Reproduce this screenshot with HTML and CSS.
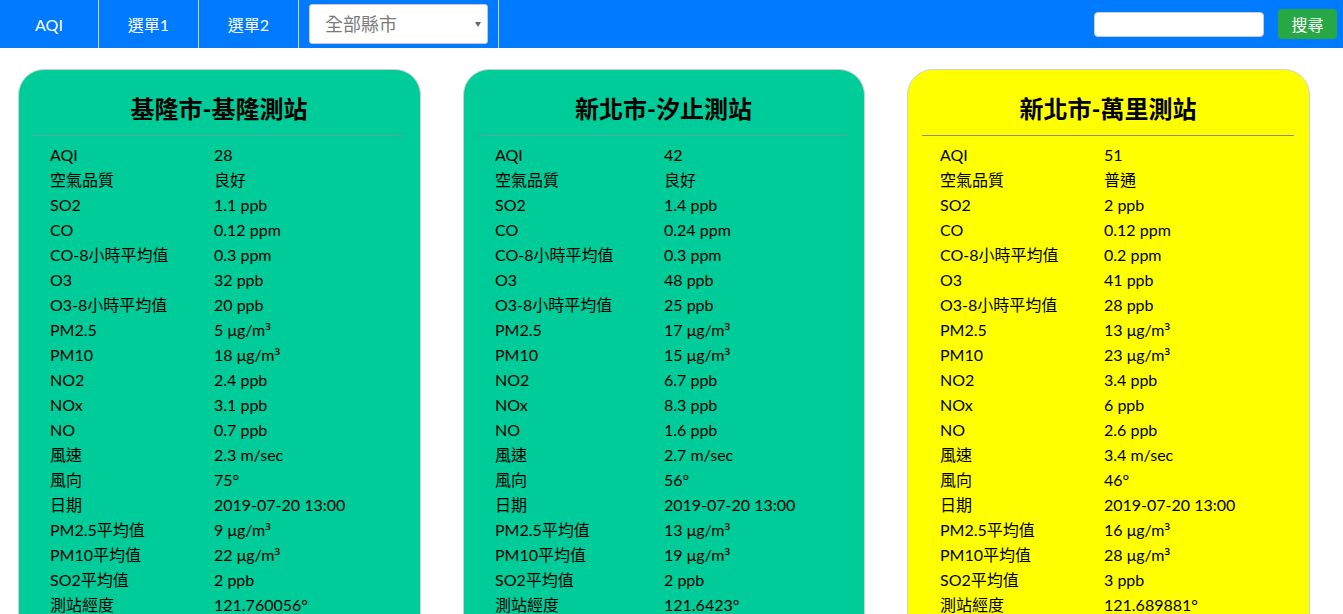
FILE: index.html
```html
<!DOCTYPE html>
<html lang="zh-Hant">
<head>
<meta charset="utf-8">
<title>AQI</title>
<link rel="stylesheet" href="styles.css">
</head>
<body>
<nav class="navbar">
  <a class="nav-item nav-first">AQI</a>
  <a class="nav-item">選單1</a>
  <a class="nav-item">選單2</a>
  <div class="nav-item nav-select-cell">
    <div class="select">全部縣市<span class="caret"></span></div>
  </div>
  <div class="nav-search">
    <div class="search-input"></div>
    <button class="search-btn">搜尋</button>
  </div>
</nav>

<main class="cards">
  <section class="card card-green">
    <h2 class="card-title">基隆市-基隆測站</h2>
    <div class="card-rule"></div>
    <dl class="rows">
      <dt>AQI</dt><dd>28</dd>
      <dt>空氣品質</dt><dd>良好</dd>
      <dt>SO2</dt><dd>1.1 ppb</dd>
      <dt>CO</dt><dd>0.12 ppm</dd>
      <dt>CO-8小時平均值</dt><dd>0.3 ppm</dd>
      <dt>O3</dt><dd>32 ppb</dd>
      <dt>O3-8小時平均值</dt><dd>20 ppb</dd>
      <dt>PM2.5</dt><dd>5 μg/m<span class="sup">³</span></dd>
      <dt>PM10</dt><dd>18 μg/m<span class="sup">³</span></dd>
      <dt>NO2</dt><dd>2.4 ppb</dd>
      <dt>NOx</dt><dd>3.1 ppb</dd>
      <dt>NO</dt><dd>0.7 ppb</dd>
      <dt>風速</dt><dd>2.3 m/sec</dd>
      <dt>風向</dt><dd>75°</dd>
      <dt>日期</dt><dd>2019-07-20 13:00</dd>
      <dt>PM2.5平均值</dt><dd>9 μg/m<span class="sup">³</span></dd>
      <dt>PM10平均值</dt><dd>22 μg/m<span class="sup">³</span></dd>
      <dt>SO2平均值</dt><dd>2 ppb</dd>
      <dt>測站經度</dt><dd>121.760056°</dd>
    </dl>
  </section>

  <section class="card card-green card-wide">
    <h2 class="card-title">新北市-汐止測站</h2>
    <div class="card-rule"></div>
    <dl class="rows">
      <dt>AQI</dt><dd>42</dd>
      <dt>空氣品質</dt><dd>良好</dd>
      <dt>SO2</dt><dd>1.4 ppb</dd>
      <dt>CO</dt><dd>0.24 ppm</dd>
      <dt>CO-8小時平均值</dt><dd>0.3 ppm</dd>
      <dt>O3</dt><dd>48 ppb</dd>
      <dt>O3-8小時平均值</dt><dd>25 ppb</dd>
      <dt>PM2.5</dt><dd>17 μg/m<span class="sup">³</span></dd>
      <dt>PM10</dt><dd>15 μg/m<span class="sup">³</span></dd>
      <dt>NO2</dt><dd>6.7 ppb</dd>
      <dt>NOx</dt><dd>8.3 ppb</dd>
      <dt>NO</dt><dd>1.6 ppb</dd>
      <dt>風速</dt><dd>2.7 m/sec</dd>
      <dt>風向</dt><dd>56°</dd>
      <dt>日期</dt><dd>2019-07-20 13:00</dd>
      <dt>PM2.5平均值</dt><dd>13 μg/m<span class="sup">³</span></dd>
      <dt>PM10平均值</dt><dd>19 μg/m<span class="sup">³</span></dd>
      <dt>SO2平均值</dt><dd>2 ppb</dd>
      <dt>測站經度</dt><dd>121.6423°</dd>
    </dl>
  </section>

  <section class="card card-yellow card-third">
    <h2 class="card-title">新北市-萬里測站</h2>
    <div class="card-rule"></div>
    <dl class="rows">
      <dt>AQI</dt><dd>51</dd>
      <dt>空氣品質</dt><dd>普通</dd>
      <dt>SO2</dt><dd>2 ppb</dd>
      <dt>CO</dt><dd>0.12 ppm</dd>
      <dt>CO-8小時平均值</dt><dd>0.2 ppm</dd>
      <dt>O3</dt><dd>41 ppb</dd>
      <dt>O3-8小時平均值</dt><dd>28 ppb</dd>
      <dt>PM2.5</dt><dd>13 μg/m<span class="sup">³</span></dd>
      <dt>PM10</dt><dd>23 μg/m<span class="sup">³</span></dd>
      <dt>NO2</dt><dd>3.4 ppb</dd>
      <dt>NOx</dt><dd>6 ppb</dd>
      <dt>NO</dt><dd>2.6 ppb</dd>
      <dt>風速</dt><dd>3.4 m/sec</dd>
      <dt>風向</dt><dd>46°</dd>
      <dt>日期</dt><dd>2019-07-20 13:00</dd>
      <dt>PM2.5平均值</dt><dd>16 μg/m<span class="sup">³</span></dd>
      <dt>PM10平均值</dt><dd>28 μg/m<span class="sup">³</span></dd>
      <dt>SO2平均值</dt><dd>3 ppb</dd>
      <dt>測站經度</dt><dd>121.689881°</dd>
    </dl>
  </section>
</main>
</body>
</html>
```

FILE: styles.css
```css
* { box-sizing: border-box; }

html, body {
  margin: 0;
  padding: 0;
  background: #ffffff;
  font-family: Lato, "Noto Sans CJK TC", sans-serif;
  color: #000;
}

.navbar {
  display: flex;
  align-items: stretch;
  height: 48px;
  background: #007bff;
}

.nav-item {
  display: flex;
  align-items: center;
  justify-content: center;
  width: 100px;
  border-right: 1px solid #d9cfc8;
  color: #ffffff;
  font-size: 16px;
  text-decoration: none;
}

.nav-first { width: 99px; }

.nav-select-cell {
  width: 200px;
  padding: 0 10px;
}

.select {
  position: relative;
  width: 179px;
  height: 40px;
  margin-top: -1px;
  background: #fff;
  border: 1px solid #c8c8c8;
  border-radius: 3px;
  color: #7a7a7a;
  font-size: 18px;
  line-height: 38px;
  padding-left: 15px;
}

.caret {
  position: absolute;
  right: 6px;
  top: 17px;
  width: 0;
  height: 0;
  border-left: 3px solid transparent;
  border-right: 3px solid transparent;
  border-top: 5px solid #666;
}

.nav-search {
  margin-left: auto;
  display: flex;
  align-items: center;
  gap: 14px;
  padding-right: 6px;
}

.search-input {
  width: 170px;
  height: 25px;
  margin-top: 1px;
  background: #fff;
  border: 1px solid #ccc;
  border-radius: 4px;
}

.search-btn {
  width: 59px;
  height: 30px;
  margin-top: -1px;
  background: #28a745;
  border: none;
  border-radius: 4px;
  color: #fff;
  font-family: Lato, "Noto Sans CJK TC", sans-serif;
  font-size: 16px;
  padding: 0;
}

.cards {
  display: flex;
  align-items: flex-start;
  gap: 42px;
  padding: 21px 0 0 18px;
}

.card {
  width: 403px;
  flex: none;
  border: 1px solid #cfcfcf;
  border-radius: 26px;
  padding: 22px 15px 40px 14px;
}

.card-wide { width: 402px; }

.card-green { background: #00cc99; }
.card-yellow { background: #ffff00; }

.card-title {
  margin: 0;
  text-align: center;
  font-size: 24px;
  font-weight: 700;
  line-height: 34px;
}

.card-rule {
  height: 1px;
  margin-top: 9px;
}
.card-green .card-rule { background: rgba(200, 120, 140, 0.45); }
.card-yellow .card-rule { background: #8c8c8c; }

.rows {
  display: grid;
  grid-template-columns: 164px 1fr;
  grid-auto-rows: 25px;
  margin: 6px 0 0 0;
  padding-left: 17px;
  font-size: 16px;
  line-height: 25px;
}
.card-wide .rows { grid-template-columns: 169px 1fr; }
.card-third .rows { padding-left: 18px; }

.rows dt, .rows dd {
  margin: 0;
  height: 25px;
  white-space: nowrap;
}

.sup {
  font-family: "Noto Sans", sans-serif;
  font-size: 16px;
  line-height: 0;
}
```
